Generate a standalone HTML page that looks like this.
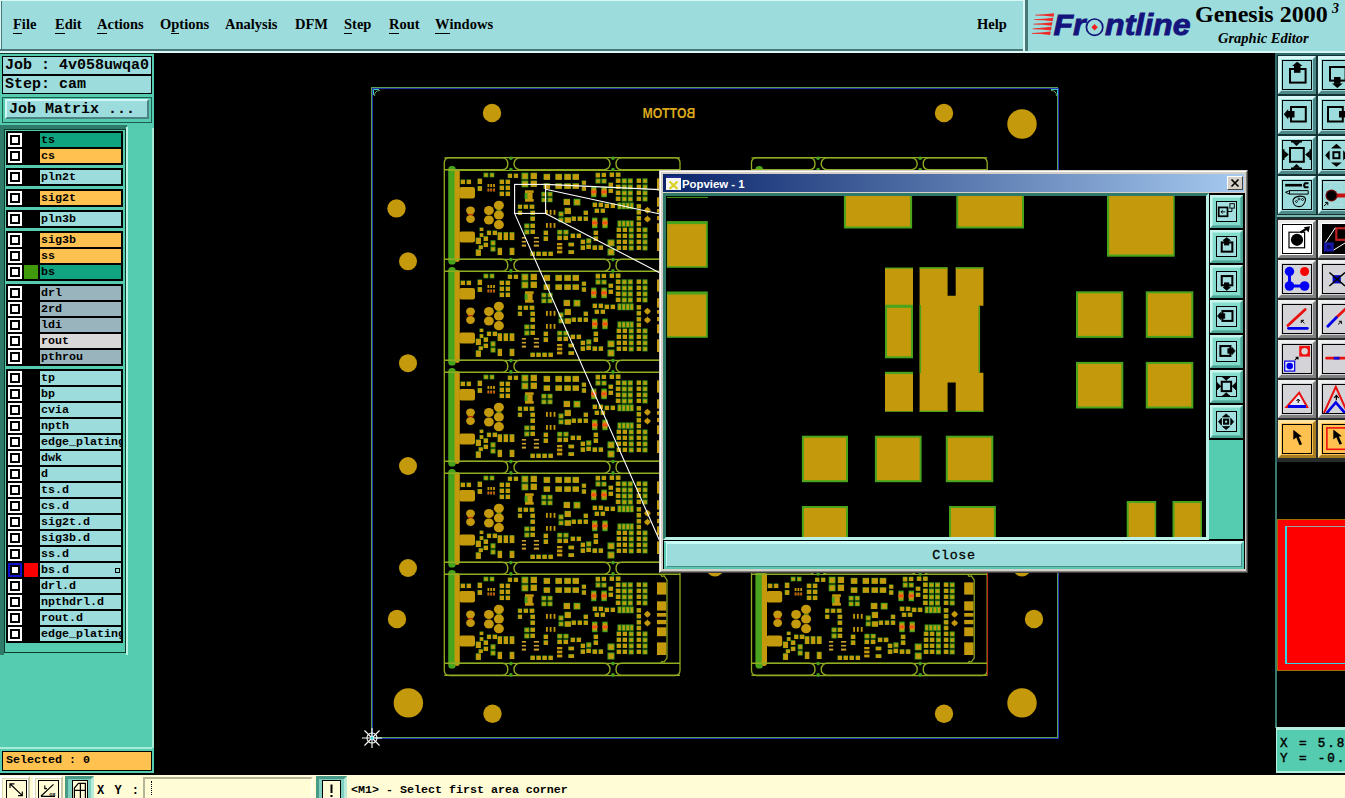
<!DOCTYPE html><html><head><meta charset="utf-8"><title>Genesis 2000 Graphic Editor</title><style>
html,body{margin:0;padding:0;background:#000;}
body{width:1345px;height:798px;overflow:hidden;position:relative;font-family:"Liberation Mono",monospace;}
.abs{position:absolute;}
.mono{font-family:"Liberation Mono",monospace;font-weight:bold;color:#000;white-space:pre;}
.serif{font-family:"Liberation Serif",serif;font-weight:bold;color:#000;white-space:pre;}
#menubar{left:0;top:0;width:1023px;height:49px;background:#9cdcdc;border-left:1px solid #d8f8f8;border-top:1px solid #d8f8f8;box-shadow:inset 1px 0 0 #4a7878;box-sizing:border-box;}
#menubar .mi{position:absolute;top:14px;font-size:14.5px;line-height:18px;}
#menubar u{text-decoration:none;border-bottom:1px solid #000;display:inline-block;line-height:15px;height:16px;}
#logo{left:1028px;top:0;width:317px;height:51px;background:#9cdcdc;}
#left{left:0;top:53px;width:154px;height:720px;background:#55ccb0;}
.lrow{position:absolute;left:0;width:117px;height:14px;}
.cb{position:absolute;left:2px;top:0;width:14px;height:14px;background:#fff;}
.cb i{position:absolute;left:2px;top:2px;width:6px;height:6px;border:2px solid #000;background:#fff;}
.lab{position:absolute;left:34px;top:0;width:81px;height:14px;overflow:hidden;font-size:11.67px;line-height:14px;padding-left:1px;box-sizing:border-box;}
.grp{position:absolute;left:6px;width:117px;background:#000;}
#status{left:0;top:775px;width:1345px;height:23px;background:#fffcd6;}
</style></head><body><svg class="abs" style="left:155px;top:53px" width="1120" height="721" viewBox="155 53 1120 721"><defs><g id="unit"><rect x="4.2" y="-4.0" width="7.6" height="98.5" fill="#48a41c" rx="3.6"/><rect x="16.5" y="9.5" width="4.6" height="4.6" fill="#48a41c"/><rect x="22.5" y="9.5" width="4.6" height="4.6" fill="#48a41c"/><rect x="33.5" y="8.5" width="4.6" height="5.6" fill="#48a41c"/><rect x="33.5" y="16.0" width="4.6" height="4.9" fill="#48a41c"/><rect x="39.5" y="2.7" width="4.8" height="4.6" fill="#48a41c"/><rect x="45.7" y="2.7" width="4.6" height="4.6" fill="#48a41c"/><rect x="55.5" y="9.5" width="4.6" height="4.6" fill="#48a41c"/><rect x="55.5" y="15.5" width="4.6" height="4.6" fill="#48a41c"/><rect x="55.5" y="21.5" width="4.6" height="4.6" fill="#48a41c"/><rect x="61.5" y="9.5" width="4.6" height="4.6" fill="#48a41c"/><rect x="61.5" y="15.5" width="4.6" height="4.6" fill="#48a41c"/><rect x="61.5" y="21.5" width="4.6" height="4.6" fill="#48a41c"/><rect x="63.7" y="3.5" width="4.4" height="4.4" fill="#48a41c"/><rect x="69.7" y="3.5" width="4.4" height="4.4" fill="#48a41c"/><rect x="77.5" y="2.7" width="6.8" height="6.8" fill="#48a41c"/><rect x="77.5" y="10.5" width="6.8" height="6.8" fill="#48a41c"/><rect x="86.5" y="2.7" width="6.4" height="6.4" fill="#48a41c"/><rect x="86.5" y="10.5" width="6.4" height="6.4" fill="#48a41c"/><rect x="52.5" y="39.3" width="5.0" height="1.4" fill="#48a41c"/><rect x="35.5" y="57.5" width="3.8" height="3.6" fill="#48a41c"/><rect x="35.5" y="63.0" width="3.8" height="3.9" fill="#48a41c"/><rect x="42.8" y="60.5" width="4.3" height="4.6" fill="#48a41c"/><rect x="48.5" y="60.5" width="4.6" height="4.6" fill="#48a41c"/><rect x="53.5" y="62.2" width="4.6" height="7.9" fill="#48a41c"/><rect x="59.5" y="62.2" width="4.6" height="7.9" fill="#48a41c"/><rect x="65.5" y="62.2" width="4.8" height="7.9" fill="#48a41c"/><rect x="31.7" y="67.5" width="5.2" height="6.6" fill="#48a41c"/><rect x="39.5" y="66.3" width="4.6" height="4.7" fill="#48a41c"/><rect x="39.5" y="72.5" width="4.6" height="4.6" fill="#48a41c"/><rect x="34.5" y="75.2" width="4.3" height="3.9" fill="#48a41c"/><rect x="46.5" y="70.3" width="5.0" height="5.2" fill="#48a41c"/><rect x="46.5" y="76.5" width="5.0" height="5.0" fill="#48a41c"/><rect x="31.7" y="79.3" width="5.2" height="6.6" fill="#48a41c"/><rect x="53.5" y="77.7" width="4.6" height="7.4" fill="#48a41c"/><rect x="65.5" y="77.7" width="4.8" height="7.4" fill="#48a41c"/><rect x="73.8" y="34.5" width="4.3" height="4.3" fill="#48a41c"/><rect x="79.5" y="34.5" width="4.6" height="4.3" fill="#48a41c"/><rect x="85.5" y="34.5" width="4.8" height="4.3" fill="#48a41c"/><rect x="73.8" y="40.5" width="4.3" height="4.4" fill="#48a41c"/><rect x="86.3" y="40.5" width="4.7" height="4.4" fill="#48a41c"/><rect x="86.3" y="46.4" width="4.7" height="4.5" fill="#48a41c"/><rect x="80.3" y="53.5" width="5.1" height="4.8" fill="#48a41c"/><rect x="86.3" y="53.5" width="4.7" height="4.4" fill="#48a41c"/><rect x="80.3" y="59.5" width="5.1" height="4.9" fill="#48a41c"/><rect x="86.3" y="59.5" width="4.7" height="4.5" fill="#48a41c"/><rect x="80.6" y="22.5" width="3.2" height="6.5" fill="#48a41c"/><rect x="99.5" y="3.8" width="6.6" height="6.0" fill="#48a41c"/><rect x="99.5" y="13.3" width="6.6" height="5.5" fill="#48a41c"/><rect x="111.3" y="3.8" width="6.6" height="6.0" fill="#48a41c"/><rect x="111.3" y="13.3" width="6.6" height="5.5" fill="#48a41c"/><rect x="120.2" y="3.8" width="6.6" height="6.0" fill="#48a41c"/><rect x="120.2" y="13.3" width="6.6" height="5.5" fill="#48a41c"/><rect x="128.4" y="3.8" width="6.6" height="6.0" fill="#48a41c"/><rect x="128.4" y="13.3" width="6.6" height="5.5" fill="#48a41c"/><rect x="137.7" y="10.5" width="4.4" height="4.2" fill="#48a41c"/><rect x="137.7" y="16.2" width="4.4" height="4.5" fill="#48a41c"/><rect x="97.4" y="21.8" width="5.0" height="4.7" fill="#48a41c"/><rect x="97.4" y="27.5" width="5.0" height="4.7" fill="#48a41c"/><rect x="103.5" y="21.8" width="5.0" height="4.7" fill="#48a41c"/><rect x="103.5" y="27.5" width="5.0" height="4.7" fill="#48a41c"/><rect x="119.5" y="28.8" width="6.6" height="6.3" fill="#48a41c"/><rect x="129.5" y="28.8" width="6.9" height="6.7" fill="#48a41c"/><rect x="120.5" y="37.8" width="6.4" height="6.3" fill="#48a41c"/><rect x="120.5" y="47.2" width="6.4" height="5.5" fill="#48a41c"/><rect x="114.5" y="41.5" width="5.0" height="5.0" fill="#48a41c"/><rect x="114.5" y="47.5" width="5.0" height="4.8" fill="#48a41c"/><rect x="127.5" y="46.4" width="4.4" height="4.5" fill="#48a41c"/><rect x="133.5" y="46.4" width="4.5" height="4.5" fill="#48a41c"/><rect x="139.5" y="46.4" width="4.5" height="4.5" fill="#48a41c"/><rect x="139.5" y="40.5" width="4.5" height="4.4" fill="#48a41c"/><rect x="99.5" y="60.5" width="4.6" height="4.6" fill="#48a41c"/><rect x="99.5" y="66.3" width="4.6" height="4.7" fill="#48a41c"/><rect x="86.3" y="81.5" width="4.6" height="4.5" fill="#48a41c"/><rect x="92.2" y="81.5" width="4.6" height="4.5" fill="#48a41c"/><rect x="98.2" y="81.5" width="4.6" height="4.5" fill="#48a41c"/><rect x="104.3" y="81.5" width="4.6" height="4.5" fill="#48a41c"/><rect x="113.2" y="59.8" width="5.1" height="4.7" fill="#48a41c"/><rect x="113.2" y="65.5" width="4.7" height="4.6" fill="#48a41c"/><rect x="119.4" y="59.8" width="5.1" height="4.7" fill="#48a41c"/><rect x="119.4" y="65.5" width="4.7" height="4.6" fill="#48a41c"/><rect x="124.3" y="72.5" width="5.8" height="3.8" fill="#48a41c"/><rect x="124.3" y="80.1" width="5.8" height="3.9" fill="#48a41c"/><rect x="126.5" y="63.5" width="4.6" height="4.6" fill="#48a41c"/><rect x="132.5" y="63.5" width="4.6" height="4.6" fill="#48a41c"/><rect x="136.5" y="69.5" width="4.6" height="4.6" fill="#48a41c"/><rect x="142.2" y="68.4" width="5.1" height="5.1" fill="#48a41c"/><rect x="136.5" y="75.3" width="4.6" height="4.6" fill="#48a41c"/><rect x="142.2" y="74.5" width="4.7" height="4.6" fill="#48a41c"/><rect x="148.4" y="75.3" width="4.7" height="4.6" fill="#48a41c"/><rect x="154.5" y="75.3" width="4.6" height="4.6" fill="#48a41c"/><rect x="149.5" y="60.5" width="4.6" height="4.6" fill="#48a41c"/><rect x="149.5" y="66.3" width="4.6" height="4.7" fill="#48a41c"/><rect x="148.5" y="32.5" width="4.6" height="4.6" fill="#48a41c"/><rect x="154.5" y="32.5" width="4.6" height="4.6" fill="#48a41c"/><rect x="150.5" y="38.5" width="4.6" height="4.4" fill="#48a41c"/><rect x="156.5" y="38.5" width="4.6" height="4.3" fill="#48a41c"/><rect x="160.5" y="33.5" width="4.6" height="4.6" fill="#48a41c"/><rect x="166.5" y="33.5" width="4.6" height="4.6" fill="#48a41c"/><rect x="147.2" y="16.6" width="5.2" height="10.6" fill="#48a41c"/><rect x="157.4" y="16.6" width="5.4" height="10.6" fill="#48a41c"/><rect x="148.1" y="47.6" width="5.3" height="10.6" fill="#48a41c"/><rect x="158.4" y="47.6" width="5.2" height="10.6" fill="#48a41c"/><rect x="151.5" y="2.7" width="4.6" height="4.7" fill="#48a41c"/><rect x="157.5" y="2.7" width="4.6" height="4.4" fill="#48a41c"/><rect x="151.5" y="8.5" width="5.0" height="5.0" fill="#48a41c"/><rect x="157.5" y="8.7" width="5.0" height="4.8" fill="#48a41c"/><rect x="165.5" y="2.4" width="4.6" height="4.5" fill="#48a41c"/><rect x="171.7" y="2.4" width="4.7" height="4.5" fill="#48a41c"/><rect x="164.4" y="12.5" width="4.7" height="4.3" fill="#48a41c"/><rect x="164.4" y="18.5" width="4.7" height="4.4" fill="#48a41c"/><rect x="171.7" y="8.4" width="4.7" height="4.6" fill="#48a41c"/><rect x="171.7" y="14.5" width="4.7" height="4.6" fill="#48a41c"/><rect x="171.7" y="20.5" width="4.7" height="4.6" fill="#48a41c"/><rect x="171.7" y="26.5" width="4.7" height="4.6" fill="#48a41c"/><rect x="177.7" y="8.4" width="5.1" height="5.0" fill="#48a41c"/><rect x="177.7" y="14.5" width="5.1" height="5.0" fill="#48a41c"/><rect x="177.7" y="20.5" width="5.1" height="5.0" fill="#48a41c"/><rect x="177.7" y="26.5" width="5.1" height="5.0" fill="#48a41c"/><rect x="183.7" y="8.4" width="5.1" height="5.0" fill="#48a41c"/><rect x="183.7" y="14.5" width="5.1" height="5.0" fill="#48a41c"/><rect x="183.7" y="20.5" width="5.1" height="5.0" fill="#48a41c"/><rect x="183.7" y="26.5" width="5.1" height="5.0" fill="#48a41c"/><rect x="192.5" y="8.4" width="4.6" height="4.5" fill="#48a41c"/><rect x="192.5" y="14.5" width="4.6" height="4.5" fill="#48a41c"/><rect x="192.5" y="20.5" width="4.6" height="4.5" fill="#48a41c"/><rect x="192.5" y="26.5" width="4.6" height="4.5" fill="#48a41c"/><rect x="192.5" y="57.5" width="4.6" height="4.5" fill="#48a41c"/><rect x="192.5" y="63.5" width="4.6" height="4.5" fill="#48a41c"/><rect x="192.5" y="69.5" width="4.6" height="4.5" fill="#48a41c"/><rect x="192.5" y="75.5" width="4.6" height="4.5" fill="#48a41c"/><rect x="198.5" y="8.4" width="5.0" height="4.9" fill="#48a41c"/><rect x="198.5" y="14.5" width="5.0" height="4.9" fill="#48a41c"/><rect x="198.5" y="20.5" width="5.0" height="4.9" fill="#48a41c"/><rect x="198.5" y="26.5" width="5.0" height="4.9" fill="#48a41c"/><rect x="198.5" y="57.5" width="5.0" height="4.9" fill="#48a41c"/><rect x="198.5" y="63.5" width="5.0" height="4.9" fill="#48a41c"/><rect x="198.5" y="69.5" width="5.0" height="4.9" fill="#48a41c"/><rect x="198.5" y="75.5" width="5.0" height="4.9" fill="#48a41c"/><rect x="192.5" y="34.0" width="4.6" height="4.5" fill="#48a41c"/><rect x="192.5" y="39.9" width="4.6" height="4.5" fill="#48a41c"/><rect x="192.5" y="45.9" width="4.6" height="4.5" fill="#48a41c"/><rect x="192.5" y="51.7" width="4.6" height="4.5" fill="#48a41c"/><rect x="173.5" y="32.5" width="3.9" height="6.7" fill="#48a41c"/><rect x="173.5" y="50.5" width="3.9" height="6.2" fill="#48a41c"/><rect x="177.7" y="32.5" width="3.9" height="6.7" fill="#48a41c"/><rect x="177.7" y="50.5" width="3.9" height="6.2" fill="#48a41c"/><rect x="181.8" y="32.5" width="3.9" height="6.7" fill="#48a41c"/><rect x="181.8" y="50.5" width="3.9" height="6.2" fill="#48a41c"/><rect x="185.7" y="32.5" width="3.9" height="6.7" fill="#48a41c"/><rect x="185.7" y="50.5" width="3.9" height="6.2" fill="#48a41c"/><rect x="172.5" y="57.5" width="4.6" height="4.5" fill="#48a41c"/><rect x="172.5" y="63.5" width="4.6" height="4.5" fill="#48a41c"/><rect x="172.5" y="69.5" width="4.6" height="4.5" fill="#48a41c"/><rect x="172.5" y="75.5" width="4.6" height="4.5" fill="#48a41c"/><rect x="178.5" y="57.5" width="4.6" height="4.5" fill="#48a41c"/><rect x="178.5" y="63.5" width="4.6" height="4.5" fill="#48a41c"/><rect x="178.5" y="69.5" width="4.6" height="4.5" fill="#48a41c"/><rect x="178.5" y="75.5" width="4.6" height="4.5" fill="#48a41c"/><rect x="184.7" y="57.5" width="5.0" height="4.9" fill="#48a41c"/><rect x="184.7" y="63.5" width="5.0" height="4.9" fill="#48a41c"/><rect x="184.7" y="69.5" width="5.0" height="4.9" fill="#48a41c"/><rect x="184.7" y="75.5" width="5.0" height="4.9" fill="#48a41c"/><rect x="163.5" y="69.5" width="7.0" height="6.8" fill="#48a41c"/><rect x="163.5" y="78.5" width="7.0" height="7.0" fill="#48a41c"/><rect x="10.6" y="-1.0" width="5.2" height="93.0" fill="#c49a0c" rx="2.4"/><rect x="17.0" y="10.0" width="4.0" height="4.0" fill="#c49a0c"/><rect x="23.0" y="10.0" width="4.0" height="4.0" fill="#c49a0c"/><rect x="34.0" y="9.0" width="4.0" height="5.0" fill="#c49a0c"/><rect x="34.0" y="16.5" width="4.0" height="4.3" fill="#c49a0c"/><rect x="40.6" y="3.8" width="2.9" height="2.7" fill="#c49a0c"/><rect x="46.8" y="3.8" width="2.7" height="2.7" fill="#c49a0c"/><rect x="43.5" y="14.0" width="1.8" height="3.0" fill="#c49a0c"/><rect x="43.5" y="18.5" width="1.8" height="3.0" fill="#c49a0c"/><rect x="46.3" y="14.0" width="1.8" height="3.0" fill="#c49a0c"/><rect x="46.3" y="18.5" width="1.8" height="3.0" fill="#c49a0c"/><rect x="49.1" y="14.0" width="1.8" height="3.0" fill="#c49a0c"/><rect x="49.1" y="18.5" width="1.8" height="3.0" fill="#c49a0c"/><rect x="56.0" y="10.0" width="4.0" height="4.0" fill="#c49a0c"/><rect x="56.0" y="16.0" width="4.0" height="4.0" fill="#c49a0c"/><rect x="56.0" y="22.0" width="4.0" height="4.0" fill="#c49a0c"/><rect x="62.0" y="10.0" width="4.0" height="4.0" fill="#c49a0c"/><rect x="62.0" y="16.0" width="4.0" height="4.0" fill="#c49a0c"/><rect x="62.0" y="22.0" width="4.0" height="4.0" fill="#c49a0c"/><rect x="64.2" y="4.0" width="3.8" height="3.8" fill="#c49a0c"/><rect x="70.2" y="4.0" width="3.8" height="3.8" fill="#c49a0c"/><rect x="78.6" y="3.8" width="4.9" height="4.9" fill="#c49a0c"/><rect x="78.6" y="11.6" width="4.9" height="4.9" fill="#c49a0c"/><rect x="87.0" y="3.2" width="5.8" height="5.8" fill="#c49a0c"/><rect x="87.0" y="11.0" width="5.8" height="5.8" fill="#c49a0c"/><rect x="15.2" y="17.0" width="15.8" height="11.5" fill="#c49a0c" rx="2.2"/><rect x="15.2" y="61.5" width="15.8" height="11.0" fill="#c49a0c" rx="2.2"/><ellipse cx="26.5" cy="40.4" rx="4.4" ry="4.0" fill="#c49a0c"/><ellipse cx="26.5" cy="49.0" rx="4.4" ry="4.0" fill="#c49a0c"/><ellipse cx="44.9" cy="40.5" rx="4.9" ry="4.5" fill="#c49a0c"/><ellipse cx="44.9" cy="50.0" rx="4.9" ry="4.5" fill="#c49a0c"/><ellipse cx="54.9" cy="35.3" rx="5.0" ry="4.6" fill="#c49a0c"/><ellipse cx="54.9" cy="45.0" rx="5.0" ry="4.6" fill="#c49a0c"/><ellipse cx="54.9" cy="54.7" rx="5.0" ry="4.6" fill="#c49a0c"/><rect x="36.0" y="58.0" width="3.2" height="3.0" fill="#c49a0c"/><rect x="36.0" y="63.5" width="3.2" height="3.3" fill="#c49a0c"/><rect x="43.3" y="61.0" width="3.7" height="4.0" fill="#c49a0c"/><rect x="49.0" y="61.0" width="4.0" height="4.0" fill="#c49a0c"/><rect x="54.0" y="62.7" width="4.0" height="7.3" fill="#c49a0c"/><rect x="60.0" y="62.7" width="4.0" height="7.3" fill="#c49a0c"/><rect x="66.0" y="62.7" width="4.2" height="7.3" fill="#c49a0c"/><rect x="32.2" y="68.0" width="4.6" height="6.0" fill="#c49a0c"/><rect x="40.0" y="66.8" width="4.0" height="4.1" fill="#c49a0c"/><rect x="40.0" y="73.0" width="4.0" height="4.0" fill="#c49a0c"/><rect x="35.0" y="75.7" width="3.7" height="3.3" fill="#c49a0c"/><rect x="47.6" y="71.4" width="3.1" height="3.3" fill="#c49a0c"/><rect x="47.6" y="77.6" width="3.1" height="3.1" fill="#c49a0c"/><rect x="32.2" y="79.8" width="4.6" height="6.0" fill="#c49a0c"/><rect x="54.0" y="78.2" width="4.0" height="6.8" fill="#c49a0c"/><rect x="66.0" y="78.2" width="4.2" height="6.8" fill="#c49a0c"/><rect x="74.3" y="35.0" width="3.7" height="3.7" fill="#c49a0c"/><rect x="80.0" y="35.0" width="4.0" height="3.7" fill="#c49a0c"/><rect x="86.0" y="35.0" width="4.2" height="3.7" fill="#c49a0c"/><rect x="74.3" y="41.0" width="3.7" height="3.8" fill="#c49a0c"/><rect x="86.8" y="41.0" width="4.1" height="3.8" fill="#c49a0c"/><rect x="86.8" y="46.9" width="4.1" height="3.9" fill="#c49a0c"/><rect x="81.4" y="54.6" width="3.2" height="2.9" fill="#c49a0c"/><rect x="86.8" y="54.0" width="4.1" height="3.8" fill="#c49a0c"/><rect x="81.4" y="60.6" width="3.2" height="3.0" fill="#c49a0c"/><rect x="86.8" y="60.0" width="4.1" height="3.9" fill="#c49a0c"/><rect x="77.8" y="67.0" width="4.2" height="1.6" fill="#c8a030"/><rect x="77.8" y="70.9" width="4.2" height="1.6" fill="#c8a030"/><rect x="77.8" y="74.6" width="4.2" height="2.0" fill="#c8a030"/><rect x="89.8" y="67.0" width="5.2" height="1.6" fill="#c8a030"/><rect x="89.8" y="70.9" width="5.2" height="1.6" fill="#c8a030"/><rect x="89.8" y="74.6" width="5.2" height="2.0" fill="#c8a030"/><rect x="81.0" y="20.3" width="8.7" height="2.6" fill="#c49a0c"/><rect x="83.4" y="22.8" width="5.2" height="6.3" fill="#c49a0c"/><rect x="81.0" y="29.0" width="8.7" height="2.7" fill="#c49a0c"/><rect x="100.0" y="4.3" width="6.0" height="5.4" fill="#c49a0c"/><rect x="100.0" y="13.8" width="6.0" height="4.9" fill="#c49a0c"/><rect x="111.8" y="4.3" width="6.0" height="5.4" fill="#c49a0c"/><rect x="111.8" y="13.8" width="6.0" height="4.9" fill="#c49a0c"/><rect x="120.7" y="4.3" width="6.0" height="5.4" fill="#c49a0c"/><rect x="120.7" y="13.8" width="6.0" height="4.9" fill="#c49a0c"/><rect x="128.9" y="4.3" width="6.0" height="5.4" fill="#c49a0c"/><rect x="128.9" y="13.8" width="6.0" height="4.9" fill="#c49a0c"/><rect x="138.2" y="11.0" width="3.8" height="3.6" fill="#c49a0c"/><rect x="138.2" y="16.7" width="3.8" height="3.9" fill="#c49a0c"/><rect x="98.5" y="22.9" width="3.1" height="2.8" fill="#c49a0c"/><rect x="98.5" y="28.6" width="3.1" height="2.8" fill="#c49a0c"/><rect x="104.6" y="22.9" width="3.1" height="2.8" fill="#c49a0c"/><rect x="104.6" y="28.6" width="3.1" height="2.8" fill="#c49a0c"/><rect x="120.0" y="29.3" width="6.0" height="5.7" fill="#c49a0c"/><rect x="130.6" y="29.9" width="5.0" height="4.8" fill="#c49a0c"/><rect x="121.0" y="38.3" width="5.8" height="5.7" fill="#c49a0c"/><rect x="121.0" y="47.7" width="5.8" height="4.9" fill="#c49a0c"/><rect x="115.6" y="42.6" width="3.1" height="3.1" fill="#c49a0c"/><rect x="115.6" y="48.6" width="3.1" height="2.9" fill="#c49a0c"/><rect x="128.0" y="46.9" width="3.8" height="3.9" fill="#c49a0c"/><rect x="134.0" y="46.9" width="3.9" height="3.9" fill="#c49a0c"/><rect x="140.0" y="46.9" width="3.9" height="3.9" fill="#c49a0c"/><rect x="140.0" y="41.0" width="3.9" height="3.8" fill="#c49a0c"/><rect x="102.0" y="39.9" width="1.8" height="4.9" fill="#c49a0c"/><rect x="102.0" y="53.0" width="1.8" height="4.8" fill="#c49a0c"/><rect x="105.7" y="39.9" width="1.8" height="4.9" fill="#c49a0c"/><rect x="105.7" y="53.0" width="1.8" height="4.8" fill="#c49a0c"/><rect x="109.6" y="39.9" width="1.8" height="4.9" fill="#c49a0c"/><rect x="109.6" y="53.0" width="1.8" height="4.8" fill="#c49a0c"/><rect x="100.0" y="61.0" width="4.0" height="4.0" fill="#c49a0c"/><rect x="100.0" y="66.8" width="4.0" height="4.1" fill="#c49a0c"/><rect x="86.8" y="82.0" width="4.0" height="3.9" fill="#c49a0c"/><rect x="92.7" y="82.0" width="4.0" height="3.9" fill="#c49a0c"/><rect x="98.7" y="82.0" width="4.0" height="3.9" fill="#c49a0c"/><rect x="104.8" y="82.0" width="4.0" height="3.9" fill="#c49a0c"/><rect x="114.3" y="60.9" width="3.2" height="2.8" fill="#c49a0c"/><rect x="113.7" y="66.0" width="4.1" height="4.0" fill="#c49a0c"/><rect x="120.5" y="60.9" width="3.2" height="2.8" fill="#c49a0c"/><rect x="119.9" y="66.0" width="4.1" height="4.0" fill="#c49a0c"/><rect x="113.0" y="73.0" width="5.3" height="2.3" fill="#c49a0c"/><rect x="113.0" y="76.6" width="5.3" height="2.7" fill="#c49a0c"/><rect x="113.0" y="80.6" width="5.3" height="2.8" fill="#c49a0c"/><rect x="124.8" y="73.0" width="5.2" height="3.2" fill="#c49a0c"/><rect x="124.8" y="80.6" width="5.2" height="3.3" fill="#c49a0c"/><rect x="127.0" y="64.0" width="4.0" height="4.0" fill="#c49a0c"/><rect x="133.0" y="64.0" width="4.0" height="4.0" fill="#c49a0c"/><rect x="137.0" y="70.0" width="4.0" height="4.0" fill="#c49a0c"/><rect x="143.3" y="69.5" width="3.2" height="3.2" fill="#c49a0c"/><rect x="137.0" y="75.8" width="4.0" height="4.0" fill="#c49a0c"/><rect x="142.7" y="75.0" width="4.1" height="4.0" fill="#c49a0c"/><rect x="148.9" y="75.8" width="4.1" height="4.0" fill="#c49a0c"/><rect x="155.0" y="75.8" width="4.0" height="4.0" fill="#c49a0c"/><rect x="150.0" y="61.0" width="4.0" height="4.0" fill="#c49a0c"/><rect x="150.0" y="66.8" width="4.0" height="4.1" fill="#c49a0c"/><rect x="149.0" y="33.0" width="4.0" height="4.0" fill="#c49a0c"/><rect x="155.0" y="33.0" width="4.0" height="4.0" fill="#c49a0c"/><rect x="151.0" y="39.0" width="4.0" height="3.8" fill="#c49a0c"/><rect x="157.0" y="39.0" width="4.0" height="3.7" fill="#c49a0c"/><rect x="161.0" y="34.0" width="4.0" height="4.0" fill="#c49a0c"/><rect x="167.0" y="34.0" width="4.0" height="4.0" fill="#c49a0c"/><rect x="147.6" y="18.2" width="4.4" height="7.4" fill="#c49a0c"/><rect x="157.8" y="18.2" width="4.6" height="7.4" fill="#c49a0c"/><rect x="148.5" y="49.2" width="4.5" height="7.4" fill="#c49a0c"/><rect x="158.8" y="49.2" width="4.4" height="7.4" fill="#c49a0c"/><rect x="152.0" y="3.2" width="4.0" height="4.1" fill="#c49a0c"/><rect x="158.0" y="3.2" width="4.0" height="3.8" fill="#c49a0c"/><rect x="152.6" y="9.6" width="3.1" height="3.1" fill="#c49a0c"/><rect x="158.6" y="9.8" width="3.1" height="2.9" fill="#c49a0c"/><rect x="166.0" y="2.9" width="4.0" height="3.9" fill="#c49a0c"/><rect x="172.2" y="2.9" width="4.1" height="3.9" fill="#c49a0c"/><rect x="164.9" y="13.0" width="4.1" height="3.7" fill="#c49a0c"/><rect x="164.9" y="19.0" width="4.1" height="3.8" fill="#c49a0c"/><rect x="172.2" y="8.9" width="4.1" height="4.0" fill="#c49a0c"/><rect x="172.2" y="15.0" width="4.1" height="4.0" fill="#c49a0c"/><rect x="172.2" y="21.0" width="4.1" height="4.0" fill="#c49a0c"/><rect x="172.2" y="27.0" width="4.1" height="4.0" fill="#c49a0c"/><rect x="178.8" y="9.5" width="3.2" height="3.1" fill="#c49a0c"/><rect x="178.8" y="15.6" width="3.2" height="3.1" fill="#c49a0c"/><rect x="178.8" y="21.6" width="3.2" height="3.1" fill="#c49a0c"/><rect x="178.8" y="27.6" width="3.2" height="3.1" fill="#c49a0c"/><rect x="184.8" y="9.5" width="3.2" height="3.1" fill="#c49a0c"/><rect x="184.8" y="15.6" width="3.2" height="3.1" fill="#c49a0c"/><rect x="184.8" y="21.6" width="3.2" height="3.1" fill="#c49a0c"/><rect x="184.8" y="27.6" width="3.2" height="3.1" fill="#c49a0c"/><rect x="193.0" y="8.9" width="4.0" height="3.9" fill="#c49a0c"/><rect x="193.0" y="15.0" width="4.0" height="3.9" fill="#c49a0c"/><rect x="193.0" y="21.0" width="4.0" height="3.9" fill="#c49a0c"/><rect x="193.0" y="27.0" width="4.0" height="3.9" fill="#c49a0c"/><rect x="193.0" y="58.0" width="4.0" height="3.9" fill="#c49a0c"/><rect x="193.0" y="64.0" width="4.0" height="3.9" fill="#c49a0c"/><rect x="193.0" y="70.0" width="4.0" height="3.9" fill="#c49a0c"/><rect x="193.0" y="76.0" width="4.0" height="3.9" fill="#c49a0c"/><rect x="199.6" y="9.5" width="3.1" height="3.0" fill="#c49a0c"/><rect x="199.6" y="15.6" width="3.1" height="3.0" fill="#c49a0c"/><rect x="199.6" y="21.6" width="3.1" height="3.0" fill="#c49a0c"/><rect x="199.6" y="27.6" width="3.1" height="3.0" fill="#c49a0c"/><rect x="199.6" y="58.6" width="3.1" height="3.0" fill="#c49a0c"/><rect x="199.6" y="64.6" width="3.1" height="3.0" fill="#c49a0c"/><rect x="199.6" y="70.6" width="3.1" height="3.0" fill="#c49a0c"/><rect x="199.6" y="76.6" width="3.1" height="3.0" fill="#c49a0c"/><rect x="193.0" y="34.5" width="4.0" height="3.9" fill="#c49a0c"/><rect x="193.0" y="40.4" width="4.0" height="3.9" fill="#c49a0c"/><rect x="193.0" y="46.4" width="4.0" height="3.9" fill="#c49a0c"/><rect x="193.0" y="52.2" width="4.0" height="3.9" fill="#c49a0c"/><rect x="174.6" y="33.6" width="2.0" height="4.8" fill="#c49a0c"/><rect x="174.6" y="51.6" width="2.0" height="4.3" fill="#c49a0c"/><rect x="178.8" y="33.6" width="2.0" height="4.8" fill="#c49a0c"/><rect x="178.8" y="51.6" width="2.0" height="4.3" fill="#c49a0c"/><rect x="182.9" y="33.6" width="2.0" height="4.8" fill="#c49a0c"/><rect x="182.9" y="51.6" width="2.0" height="4.3" fill="#c49a0c"/><rect x="186.8" y="33.6" width="2.0" height="4.8" fill="#c49a0c"/><rect x="186.8" y="51.6" width="2.0" height="4.3" fill="#c49a0c"/><rect x="173.0" y="58.0" width="4.0" height="3.9" fill="#c49a0c"/><rect x="173.0" y="64.0" width="4.0" height="3.9" fill="#c49a0c"/><rect x="173.0" y="70.0" width="4.0" height="3.9" fill="#c49a0c"/><rect x="173.0" y="76.0" width="4.0" height="3.9" fill="#c49a0c"/><rect x="179.0" y="58.0" width="4.0" height="3.9" fill="#c49a0c"/><rect x="179.0" y="64.0" width="4.0" height="3.9" fill="#c49a0c"/><rect x="179.0" y="70.0" width="4.0" height="3.9" fill="#c49a0c"/><rect x="179.0" y="76.0" width="4.0" height="3.9" fill="#c49a0c"/><rect x="185.8" y="58.6" width="3.1" height="3.0" fill="#c49a0c"/><rect x="185.8" y="64.6" width="3.1" height="3.0" fill="#c49a0c"/><rect x="185.8" y="70.6" width="3.1" height="3.0" fill="#c49a0c"/><rect x="185.8" y="76.6" width="3.1" height="3.0" fill="#c49a0c"/><rect x="164.6" y="70.6" width="5.1" height="4.9" fill="#c49a0c"/><rect x="164.6" y="79.6" width="5.1" height="5.1" fill="#c49a0c"/><circle cx="203.4" cy="40.2" r="2.6" fill="#c49a0c"/><path d="M200 40.2 h6.8 M203.4 36.9 v6.6" stroke="#c49a0c" stroke-width="1"/><circle cx="203.4" cy="49.0" r="2.6" fill="#c49a0c"/><path d="M200 49.0 h6.8 M203.4 45.7 v6.6" stroke="#c49a0c" stroke-width="1"/><rect x="213.0" y="8.4" width="9.3" height="12.2" fill="#c49a0c"/><rect x="213.0" y="27.3" width="9.3" height="9.3" fill="#c49a0c"/><rect x="213.0" y="39.0" width="9.3" height="3.7" fill="#c49a0c"/><rect x="213.0" y="45.9" width="9.3" height="4.3" fill="#c49a0c"/><rect x="213.0" y="53.3" width="9.3" height="8.9" fill="#c49a0c"/><rect x="213.0" y="68.4" width="9.3" height="12.6" fill="#c49a0c"/><rect x="43.5" y="19.6" width="1.8" height="1.2" fill="#d03010"/><rect x="46.3" y="19.6" width="1.8" height="1.2" fill="#d03010"/><rect x="49.1" y="19.6" width="1.8" height="1.2" fill="#d03010"/><rect x="23.5" y="44.2" width="6.0" height="0.9" fill="#e03010"/><rect x="147.1" y="20.5" width="5.4" height="2.8" fill="#f05018"/><rect x="157.3" y="20.5" width="5.6" height="2.8" fill="#f05018"/><rect x="148.0" y="51.5" width="5.5" height="2.8" fill="#f05018"/><rect x="158.3" y="51.5" width="5.4" height="2.8" fill="#f05018"/><path d="M4.5 0.5 H216.5 L218 2.5 L220 1.8 L223 6 V84 L220 88 L218 87.4 L216.5 89.4 H4.5" fill="none" stroke="#90ac20" stroke-width="1.2"/></g><g id="slots" fill="none" stroke="#90ac20" stroke-width="1.4"><path d="M0.3 0.3 H58 C62 0.3,63.8 3,63.8 6.2 C63.8 9.5,62 12.2,58 12.2 H0.3"/><rect x="70" y="0.3" width="96" height="11.9" rx="5.8"/><path d="M236 0.3 H178 C174 0.3,172 3,172 6.2 C172 9.5,174 12.2,178 12.2 H236"/><circle cx="66.9" cy="0.6" r="1.8" fill="#48a41c" stroke="none"/><circle cx="66.9" cy="11.9" r="1.8" fill="#48a41c" stroke="none"/><circle cx="169.0" cy="0.6" r="1.8" fill="#48a41c" stroke="none"/><circle cx="169.0" cy="11.9" r="1.8" fill="#48a41c" stroke="none"/></g></defs><rect x="371.5" y="87.5" width="686" height="650" fill="none" stroke="#5aa050" stroke-width="1"/><rect x="372.5" y="88.5" width="686" height="650" fill="none" stroke="#2434b0" stroke-width="1"/><path d="M374.5 96 Q374.5 90.5 380 90.5" fill="none" stroke="#58a850" stroke-width="1"/><path d="M379 89.5 H373.5 V95" fill="none" stroke="#40c8c0" stroke-width="1"/><path d="M1056.5 96 Q1056.5 90.5 1051 90.5" fill="none" stroke="#58a850" stroke-width="1"/><path d="M1051 89.5 H1057.5 V95" fill="none" stroke="#40c8c0" stroke-width="1"/><circle cx="492.0" cy="113.0" r="9.2" fill="#c49a0c"/><circle cx="944.0" cy="113.0" r="9.2" fill="#c49a0c"/><circle cx="1022.0" cy="124.0" r="14.7" fill="#c49a0c"/><circle cx="396.5" cy="208.4" r="9.2" fill="#c49a0c"/><circle cx="408.0" cy="261.3" r="9.0" fill="#c49a0c"/><circle cx="408.0" cy="363.2" r="9.0" fill="#c49a0c"/><circle cx="408.0" cy="466.0" r="9.0" fill="#c49a0c"/><circle cx="408.0" cy="568.0" r="9.0" fill="#c49a0c"/><circle cx="397.0" cy="619.0" r="9.2" fill="#c49a0c"/><circle cx="408.4" cy="702.9" r="14.7" fill="#c49a0c"/><circle cx="492.5" cy="713.8" r="9.2" fill="#c49a0c"/><circle cx="944.0" cy="713.8" r="9.2" fill="#c49a0c"/><circle cx="1022.0" cy="702.9" r="14.7" fill="#c49a0c"/><circle cx="1034.0" cy="619.0" r="9.2" fill="#c49a0c"/><circle cx="715.0" cy="567.2" r="9.2" fill="#c49a0c"/><circle cx="1022.0" cy="567.2" r="9.2" fill="#c49a0c"/><text transform="translate(695.3 118) scale(-0.86 1)" font-family="Liberation Sans, sans-serif" font-size="14.2" font-weight="bold" fill="#dcaa1c">BOTTOM</text><rect x="444.3" y="157.6" width="235.7" height="518" rx="5" fill="none" stroke="#90ac20" stroke-width="1.3"/><use href="#unit" x="444.0" y="170.0"/><use href="#unit" x="444.0" y="271.0"/><use href="#unit" x="444.0" y="372.0"/><use href="#unit" x="444.0" y="473.0"/><use href="#unit" x="444.0" y="574.0"/><use href="#slots" x="444.0" y="157.6"/><use href="#slots" x="444.0" y="259.0"/><use href="#slots" x="444.0" y="360.0"/><use href="#slots" x="444.0" y="461.0"/><use href="#slots" x="444.0" y="562.0"/><use href="#slots" x="444.0" y="663.0"/><rect x="751.5" y="157.6" width="235.7" height="518" rx="5" fill="none" stroke="#90ac20" stroke-width="1.3"/><use href="#unit" x="751.2" y="170.0"/><use href="#unit" x="751.2" y="271.0"/><use href="#unit" x="751.2" y="372.0"/><use href="#unit" x="751.2" y="473.0"/><use href="#unit" x="751.2" y="574.0"/><use href="#slots" x="751.2" y="157.6"/><use href="#slots" x="751.2" y="259.0"/><use href="#slots" x="751.2" y="360.0"/><use href="#slots" x="751.2" y="461.0"/><use href="#slots" x="751.2" y="562.0"/><use href="#slots" x="751.2" y="663.0"/><path d="M987.6 573 V676" stroke="#c02018" stroke-width="1"/><g fill="none" stroke="#fff" stroke-width="1.1"><rect x="514.6" y="184.4" width="31" height="29"/><path d="M545.6 184.4 L660 189.6 M545.6 189.3 L660 214 M545.6 213.4 L660 273 M514.6 213.4 L662 546"/></g><g stroke="#fff" stroke-width="1.1" fill="none"><circle cx="372" cy="738" r="5"/><path d="M372 728 V748 M362 738 H382 M364.5 730.5 L379.5 745.5 M364.5 745.5 L379.5 730.5"/></g><circle cx="372" cy="738" r="1.5" fill="#30d8e8"/></svg><div id="menubar" class="abs"><span class="mi serif" style="left:12px"><u>F</u>ile</span><span class="mi serif" style="left:54px"><u>E</u>dit</span><span class="mi serif" style="left:96px"><u>A</u>ctions</span><span class="mi serif" style="left:159px">O<u>p</u>tions</span><span class="mi serif" style="left:224px">Analysis</span><span class="mi serif" style="left:294px">DFM</span><span class="mi serif" style="left:343px"><u>S</u>tep</span><span class="mi serif" style="left:388px"><u>R</u>out</span><span class="mi serif" style="left:434px"><u>W</u>indows</span><span class="mi serif" style="left:976px">Help</span></div><div class="abs" style="left:0;top:49px;width:1025px;height:2px;background:#4a7878"></div><div class="abs" style="left:0;top:51px;width:1345px;height:2px;background:#d8f8f8"></div><div class="abs" style="left:1023px;top:0;width:2px;height:51px;background:#d8f8f8"></div><div class="abs" style="left:1025px;top:0;width:3px;height:51px;background:#4a7878"></div><div id="logo" class="abs"><svg class="abs" style="left:0;top:0" width="317" height="51" viewBox="1028 0 317 51"><polygon points="1035.3,14.8 1044.5,14.2 1054.2,13.2 1053.6,16.8 1044.5,15.8 1035.3,15.6" fill="#f02828"/><polygon points="1034.4,19.3 1043.6,18.7 1053.3,17.7 1052.7,21.3 1043.6,20.3 1034.4,20.1" fill="#f02828"/><polygon points="1033.5,23.8 1042.7,23.2 1052.4,22.2 1051.8,25.8 1042.7,24.8 1033.5,24.6" fill="#f02828"/><polygon points="1032.7,28.4 1041.9,27.8 1051.6,26.8 1051.0,30.4 1041.9,29.4 1032.7,29.2" fill="#f02828"/><polygon points="1031.8,33.0 1041.0,32.4 1050.7,31.4 1050.1,35.0 1041.0,34.0 1031.8,33.8" fill="#f02828"/><text x="1053.5" y="34.6" font-family="Liberation Sans, sans-serif" font-weight="bold" font-style="italic" font-size="30" fill="#14147c" stroke="#14147c" stroke-width="0.9" textLength="137" lengthAdjust="spacingAndGlyphs">Fr<tspan fill="#9cdcdc" stroke="#9cdcdc">o</tspan>ntline</text><circle cx="1094.6" cy="27.2" r="8.2" fill="none" stroke="#14147c" stroke-width="1.7"/><polygon points="1094.6,24 1097.8,27.2 1094.6,30.4 1091.4,27.2" fill="#f02020"/></svg><span class="abs serif" style="left:167px;top:1px;font-size:24px;line-height:26px">Genesis 2000</span><span class="abs serif" style="left:304px;top:2px;font-size:14px;line-height:14px;font-style:italic">3</span><span class="abs serif" style="left:190px;top:30px;font-size:14.5px;line-height:16px;font-style:italic">Graphic Editor</span></div><div id="left" class="abs"><div class="abs" style="left:0;top:0;width:154px;height:1px;background:#103828"></div><div class="abs" style="left:152px;top:75px;width:2px;height:620px;background:#a8ecd8"></div><div class="abs mono" style="left:2px;top:3px;width:150px;height:19px;box-sizing:border-box;border:1px solid #000;background:#9cdcdc;font-size:15px;line-height:17px;padding-left:2px">Job : 4v058uwqa0</div><div class="abs mono" style="left:2px;top:22px;width:150px;height:19px;box-sizing:border-box;border:1px solid #000;background:#9cdcdc;font-size:15px;line-height:17px;padding-left:2px">Step: cam</div><div class="abs" style="left:2px;top:44px;width:150px;height:26px;box-sizing:border-box;border:1px solid #1c5c4c;"></div><div class="abs mono" style="left:5px;top:46px;width:144px;height:20px;box-sizing:border-box;border:2px solid;border-color:#d4f8f8 #4a8484 #4a8484 #d4f8f8;background:#9cdcdc;font-size:15px;line-height:18px;padding-left:2px">Job Matrix ...</div><div class="abs" style="left:0;top:72px;width:127px;height:4px;background:#2f7a68"></div><div class="abs" style="left:0;top:72px;width:4px;height:530px;background:#2f7a68"></div><div class="abs" style="left:4px;top:76px;width:122px;height:524px;box-sizing:border-box;border:1px solid #0c3c2c;"></div><div class="abs" style="left:126px;top:74px;width:2px;height:528px;background:#b8f4e4"></div><div class="grp" style="top:78px;height:34px"><div class="lrow" style="top:2px"><span class="cb"><i></i></span><span class="lab mono" style="background:#10a37f">ts</span></div><div class="lrow" style="top:18px"><span class="cb"><i></i></span><span class="lab mono" style="background:#ffc250">cs</span></div></div><div class="grp" style="top:115px;height:18px"><div class="lrow" style="top:2px"><span class="cb"><i></i></span><span class="lab mono" style="background:#9cdcdc">pln2t</span></div></div><div class="grp" style="top:136px;height:18px"><div class="lrow" style="top:2px"><span class="cb"><i></i></span><span class="lab mono" style="background:#ffc250">sig2t</span></div></div><div class="grp" style="top:157px;height:18px"><div class="lrow" style="top:2px"><span class="cb"><i></i></span><span class="lab mono" style="background:#9cdcdc">pln3b</span></div></div><div class="grp" style="top:178px;height:50px"><div class="lrow" style="top:2px"><span class="cb"><i></i></span><span class="lab mono" style="background:#ffc250">sig3b</span></div><div class="lrow" style="top:18px"><span class="cb"><i></i></span><span class="lab mono" style="background:#ffc250">ss</span></div><div class="lrow" style="top:34px"><span class="cb"><i></i></span><span class="abs" style="left:18px;top:0;width:14px;height:14px;background:#3f9a0c"></span><span class="lab mono" style="background:#10a37f">bs</span></div></div><div class="grp" style="top:231px;height:82px"><div class="lrow" style="top:2px"><span class="cb"><i></i></span><span class="lab mono" style="background:#9ab4be">drl</span></div><div class="lrow" style="top:18px"><span class="cb"><i></i></span><span class="lab mono" style="background:#9ab4be">2rd</span></div><div class="lrow" style="top:34px"><span class="cb"><i></i></span><span class="lab mono" style="background:#9ab4be">ldi</span></div><div class="lrow" style="top:50px"><span class="cb"><i></i></span><span class="lab mono" style="background:#d8d8d8">rout</span></div><div class="lrow" style="top:66px"><span class="cb"><i></i></span><span class="lab mono" style="background:#9ab4be">pthrou</span></div></div><div class="grp" style="top:316px;height:274px"><div class="lrow" style="top:2px"><span class="cb"><i></i></span><span class="lab mono" style="background:#9cdcdc">tp</span></div><div class="lrow" style="top:18px"><span class="cb"><i></i></span><span class="lab mono" style="background:#9cdcdc">bp</span></div><div class="lrow" style="top:34px"><span class="cb"><i></i></span><span class="lab mono" style="background:#9cdcdc">cvia</span></div><div class="lrow" style="top:50px"><span class="cb"><i></i></span><span class="lab mono" style="background:#9cdcdc">npth</span></div><div class="lrow" style="top:66px"><span class="cb"><i></i></span><span class="lab mono" style="background:#9cdcdc">edge_plating</span></div><div class="lrow" style="top:82px"><span class="cb"><i></i></span><span class="lab mono" style="background:#9cdcdc">dwk</span></div><div class="lrow" style="top:98px"><span class="cb"><i></i></span><span class="lab mono" style="background:#9cdcdc">d</span></div><div class="lrow" style="top:114px"><span class="cb"><i></i></span><span class="lab mono" style="background:#9cdcdc">ts.d</span></div><div class="lrow" style="top:130px"><span class="cb"><i></i></span><span class="lab mono" style="background:#9cdcdc">cs.d</span></div><div class="lrow" style="top:146px"><span class="cb"><i></i></span><span class="lab mono" style="background:#9cdcdc">sig2t.d</span></div><div class="lrow" style="top:162px"><span class="cb"><i></i></span><span class="lab mono" style="background:#9cdcdc">sig3b.d</span></div><div class="lrow" style="top:178px"><span class="cb"><i></i></span><span class="lab mono" style="background:#9cdcdc">ss.d</span></div><div class="lrow" style="top:194px"><span class="cb" style="background:#1010d0"><i></i></span><span class="abs" style="left:18px;top:0;width:14px;height:14px;background:#ff0000"></span><span class="lab mono" style="background:#9cdcdc">bs.d</span><span class="abs" style="left:109px;top:5px;width:3px;height:3px;border:1px solid #000"></span></div><div class="lrow" style="top:210px"><span class="cb"><i></i></span><span class="lab mono" style="background:#9cdcdc">drl.d</span></div><div class="lrow" style="top:226px"><span class="cb"><i></i></span><span class="lab mono" style="background:#9cdcdc">npthdrl.d</span></div><div class="lrow" style="top:242px"><span class="cb"><i></i></span><span class="lab mono" style="background:#9cdcdc">rout.d</span></div><div class="lrow" style="top:258px"><span class="cb"><i></i></span><span class="lab mono" style="background:#9cdcdc">edge_plating</span></div></div><div class="abs" style="left:0;top:694px;width:152px;height:2px;background:#a8ecd8"></div><div class="abs mono" style="left:2px;top:698px;width:150px;height:20px;box-sizing:border-box;border:1px solid #000;background:#ffc250;font-size:11.67px;line-height:17px;padding-left:3px">Selected : 0</div></div><div class="abs" style="left:1275px;top:53px;width:70px;height:409px;background:#143434;border-left:2px solid #2f6a6a;border-top:2px solid #2f6a6a;box-sizing:border-box;overflow:hidden"><div class="abs" style="left:0;top:163px;width:70px;height:244px;background:#282c2c"></div><div class="abs" style="left:1px;top:1px;width:38px;height:38px;box-sizing:border-box;border:3px solid;border-color:#d8f8f8 #4e8888 #4e8888 #d8f8f8;background:#9cdcdc"><div class="abs" style="left:1px;top:1px;width:30px;height:30px;box-sizing:border-box;border:1px solid #000;background:#9cdcdc"><svg class="abs" style="left:0;top:0" width="28" height="28" viewBox="0 0 28 28"><rect x="7" y="8" width="15.6" height="13.6" fill="none" stroke="#000" stroke-width="2"/><rect x="11" y="4.5" width="6.5" height="7.3" fill="#000"/><polygon points="14.2,0.8 9.0,5.0 19.6,5.0" fill="#000"/></svg></div></div><div class="abs" style="left:41px;top:1px;width:38px;height:38px;box-sizing:border-box;border:3px solid;border-color:#d8f8f8 #4e8888 #4e8888 #d8f8f8;background:#9cdcdc"><div class="abs" style="left:1px;top:1px;width:30px;height:30px;box-sizing:border-box;border:1px solid #000;background:#9cdcdc"><svg class="abs" style="left:0;top:0" width="28" height="28" viewBox="0 0 28 28"><rect x="7" y="6" width="15.6" height="13.6" fill="none" stroke="#000" stroke-width="2"/><rect x="11" y="16" width="6.5" height="6.8" fill="#000"/><polygon points="14.3,27.0 9.0,22.5 19.8,22.5" fill="#000"/></svg></div></div><div class="abs" style="left:1px;top:41px;width:38px;height:38px;box-sizing:border-box;border:3px solid;border-color:#d8f8f8 #4e8888 #4e8888 #d8f8f8;background:#9cdcdc"><div class="abs" style="left:1px;top:1px;width:30px;height:30px;box-sizing:border-box;border:1px solid #000;background:#9cdcdc"><svg class="abs" style="left:0;top:0" width="28" height="28" viewBox="0 0 28 28"><rect x="8" y="6" width="14.8" height="14.5" fill="none" stroke="#000" stroke-width="2"/><rect x="5" y="10" width="6.5" height="6.5" fill="#000"/><polygon points="0.8,13.2 5.2,8.0 5.2,18.6" fill="#000"/></svg></div></div><div class="abs" style="left:41px;top:41px;width:38px;height:38px;box-sizing:border-box;border:3px solid;border-color:#d8f8f8 #4e8888 #4e8888 #d8f8f8;background:#9cdcdc"><div class="abs" style="left:1px;top:1px;width:30px;height:30px;box-sizing:border-box;border:1px solid #000;background:#9cdcdc"><svg class="abs" style="left:0;top:0" width="28" height="28" viewBox="0 0 28 28"><rect x="5" y="6" width="14.8" height="14.5" fill="none" stroke="#000" stroke-width="2"/><rect x="16" y="10" width="6.5" height="6.5" fill="#000"/><polygon points="26.8,13.2 22.3,8.0 22.3,18.6" fill="#000"/></svg></div></div><div class="abs" style="left:1px;top:81px;width:38px;height:38px;box-sizing:border-box;border:3px solid;border-color:#d8f8f8 #4e8888 #4e8888 #d8f8f8;background:#9cdcdc"><div class="abs" style="left:1px;top:1px;width:30px;height:30px;box-sizing:border-box;border:1px solid #000;background:#9cdcdc"><svg class="abs" style="left:0;top:0" width="28" height="28" viewBox="0 0 28 28"><rect x="7" y="7" width="13.8" height="13.8" fill="none" stroke="#000" stroke-width="2"/><path d="M8 0.7 H19 M8 27.3 H19 M0.7 8.2 V19 M27.3 8.2 V19" stroke="#000" stroke-width="1.5" fill="none"/><polygon points="9.6,1.2 17.4,1.2 13.5,5.0" fill="#000"/><polygon points="9.6,26.8 17.4,26.8 13.5,23.0" fill="#000"/><polygon points="1.2,9.7 1.2,17.5 5.8,13.6" fill="#000"/><polygon points="26.8,9.7 26.8,17.5 22.2,13.6" fill="#000"/></svg></div></div><div class="abs" style="left:41px;top:81px;width:38px;height:38px;box-sizing:border-box;border:3px solid;border-color:#d8f8f8 #4e8888 #4e8888 #d8f8f8;background:#9cdcdc"><div class="abs" style="left:1px;top:1px;width:30px;height:30px;box-sizing:border-box;border:1px solid #000;background:#9cdcdc"><svg class="abs" style="left:0;top:0" width="28" height="28" viewBox="0 0 28 28"><rect x="10.4" y="11.2" width="6" height="6" fill="none" stroke="#000" stroke-width="2"/><polygon points="13.4,2.8 8.0,7.4 18.8,7.4" fill="#000"/><polygon points="13.4,25.8 8.0,21.4 18.8,21.4" fill="#000"/><polygon points="2.2,14.2 6.6,9.2 6.6,19.4" fill="#000"/><polygon points="24.6,14.2 20.2,9.2 20.2,19.4" fill="#000"/></svg></div></div><div class="abs" style="left:1px;top:121px;width:38px;height:38px;box-sizing:border-box;border:3px solid;border-color:#d8f8f8 #4e8888 #4e8888 #d8f8f8;background:#9cdcdc"><div class="abs" style="left:1px;top:1px;width:30px;height:30px;box-sizing:border-box;border:1px solid #000;background:#9cdcdc"><svg class="abs" style="left:0;top:0" width="28" height="28" viewBox="0 0 28 28"><path d="M2.2 4.2 H19" stroke="#000" stroke-width="2.6" fill="none"/><path d="M25.5 2.3 H22 A3 3 0 0 0 22 6.3 H25.5" stroke="#000" stroke-width="2" fill="none"/><path d="M2.5 11.3 L6.5 9.6 H25.2 V13.1 H6.5 Z M6.5 9.6 V13.1" stroke="#000" stroke-width="1" fill="none"/><path d="M10 20 C10 16,16 14.5,20 15.5 C24 16.5,22.5 21,20.5 23.5 C18.5 26.5,10.5 27,10 20 Z" stroke="#000" stroke-width="1.1" fill="none"/><circle cx="13.5" cy="20.5" r="1" fill="none" stroke="#000" stroke-width=".8"/><circle cx="16" cy="18" r="1" fill="none" stroke="#000" stroke-width=".8"/><circle cx="19.5" cy="18.5" r="1" fill="none" stroke="#000" stroke-width=".8"/></svg></div></div><div class="abs" style="left:41px;top:121px;width:38px;height:38px;box-sizing:border-box;border:3px solid;border-color:#d8f8f8 #4e8888 #4e8888 #d8f8f8;background:#9cdcdc"><div class="abs" style="left:1px;top:1px;width:30px;height:30px;box-sizing:border-box;border:1px solid #000;background:#9cdcdc"><svg class="abs" style="left:0;top:0" width="28" height="28" viewBox="0 0 28 28"><path d="M8 0 V28 M18.2 0 V28 M0 1.5 H28 M0 12.5 H28 M0 23.5 H28" stroke="#b4dcdc" stroke-width="1" fill="none"/><path d="M8.5 14.5 H28" stroke="#c81010" stroke-width="4" fill="none"/><circle cx="8.5" cy="14.5" r="6" fill="#700808"/><circle cx="8.5" cy="14.5" r="4.8" fill="#000"/><path d="M1 25 L4.6 21.6 M2 21.4 H4.8 V24.2" stroke="#000" stroke-width="1" fill="none"/></svg></div></div><div class="abs" style="left:1px;top:165px;width:38px;height:38px;box-sizing:border-box;border:3px solid;border-color:#ececec #808080 #808080 #ececec;background:#ffffff"><div class="abs" style="left:1px;top:1px;width:30px;height:30px;box-sizing:border-box;border:1px solid #000;background:#ffffff"><svg class="abs" style="left:0;top:0" width="28" height="28" viewBox="0 0 28 28"><rect x="6" y="7.2" width="15.6" height="15.6" fill="none" stroke="#000" stroke-width="1.2"/><circle cx="14" cy="14.8" r="6.1" fill="#000"/><path d="M17.5 7.5 L25 2.8" stroke="#000" stroke-width="2.2" fill="none"/><polygon points="27.0,1.2 20.8,2.2 25.6,7.6" fill="#000"/></svg></div></div><div class="abs" style="left:41px;top:165px;width:38px;height:38px;box-sizing:border-box;border:3px solid;border-color:#ececec #808080 #808080 #ececec;background:#ffffff"><div class="abs" style="left:1px;top:1px;width:30px;height:30px;box-sizing:border-box;border:1px solid #000;background:#ffffff"><svg class="abs" style="left:0;top:0" width="28" height="28" viewBox="0 0 28 28"><rect x="0" y="0" width="28" height="28" fill="#000"/><rect x="13.3" y="3.3" width="14" height="11.5" fill="none" stroke="#c02020" stroke-width="2.2"/><rect x="1" y="17.4" width="9.7" height="9.2" fill="#1818a8"/><rect x="4" y="20.2" width="3.6" height="3.6" fill="#08085c"/><path d="M2.6 17.4 L12.3 2.8 M10.7 25 L22 18" stroke="#fff" stroke-width="1" fill="none"/></svg></div></div><div class="abs" style="left:1px;top:205px;width:38px;height:38px;box-sizing:border-box;border:3px solid;border-color:#f0f0f0 #808080 #808080 #f0f0f0;background:#d4d4d8"><div class="abs" style="left:1px;top:1px;width:30px;height:30px;box-sizing:border-box;border:1px solid #000;background:#d4d4d8"><svg class="abs" style="left:0;top:0" width="28" height="28" viewBox="0 0 28 28"><path d="M6.5 6.5 V21 H21.6" stroke="#0000f8" stroke-width="3" fill="none"/><circle cx="6.5" cy="6.5" r="4.7" fill="#0000f8"/><circle cx="6.5" cy="21" r="4.8" fill="#0000f8"/><circle cx="21.6" cy="21" r="4.8" fill="#0000f8"/><circle cx="21.6" cy="6.5" r="4.5" fill="#f80000"/></svg></div></div><div class="abs" style="left:41px;top:205px;width:38px;height:38px;box-sizing:border-box;border:3px solid;border-color:#f0f0f0 #808080 #808080 #f0f0f0;background:#d4d4d8"><div class="abs" style="left:1px;top:1px;width:30px;height:30px;box-sizing:border-box;border:1px solid #000;background:#d4d4d8"><svg class="abs" style="left:0;top:0" width="28" height="28" viewBox="0 0 28 28"><rect x="9.6" y="10.2" width="8.2" height="8.2" fill="#0000c8"/><path d="M6.4 7.5 L22 21 M6.4 21 L22 7.5" stroke="#000" stroke-width="1.6" fill="none"/></svg></div></div><div class="abs" style="left:1px;top:245px;width:38px;height:38px;box-sizing:border-box;border:3px solid;border-color:#f0f0f0 #808080 #808080 #f0f0f0;background:#d4d4d8"><div class="abs" style="left:1px;top:1px;width:30px;height:30px;box-sizing:border-box;border:1px solid #000;background:#d4d4d8"><svg class="abs" style="left:0;top:0" width="28" height="28" viewBox="0 0 28 28"><path d="M4.9 20.6 L22.2 4.5" stroke="#e81010" stroke-width="2.8" stroke-linecap="round" fill="none"/><path d="M5.5 23.3 H24.3" stroke="#0000e8" stroke-width="2.8" stroke-linecap="round" fill="none"/><path d="M21.5 18.3 L18.3 15.3 M18.3 18 V15.3 H21" stroke="#000" stroke-width="1" fill="none"/></svg></div></div><div class="abs" style="left:41px;top:245px;width:38px;height:38px;box-sizing:border-box;border:3px solid;border-color:#f0f0f0 #808080 #808080 #f0f0f0;background:#d4d4d8"><div class="abs" style="left:1px;top:1px;width:30px;height:30px;box-sizing:border-box;border:1px solid #000;background:#d4d4d8"><svg class="abs" style="left:0;top:0" width="28" height="28" viewBox="0 0 28 28"><path d="M13.4 12.5 L24 2.5" stroke="#e81010" stroke-width="2.8" stroke-linecap="round" fill="none"/><path d="M4.8 21.2 L13.4 12.5" stroke="#0000e8" stroke-width="2.8" stroke-linecap="round" fill="none"/><path d="M15 19.5 L18.4 16.3 M15.8 16.3 H18.4 V19" stroke="#000" stroke-width="1" fill="none"/></svg></div></div><div class="abs" style="left:1px;top:285px;width:38px;height:38px;box-sizing:border-box;border:3px solid;border-color:#f0f0f0 #808080 #808080 #f0f0f0;background:#d4d4d8"><div class="abs" style="left:1px;top:1px;width:30px;height:30px;box-sizing:border-box;border:1px solid #000;background:#d4d4d8"><svg class="abs" style="left:0;top:0" width="28" height="28" viewBox="0 0 28 28"><rect x="16.2" y="0.8" width="10.8" height="10.8" fill="#f01010"/><circle cx="21.6" cy="6.2" r="3.2" fill="#d8d8d8"/><rect x="1.7" y="16.1" width="10" height="10" fill="#e8e8f8" stroke="#0000e0" stroke-width="1.2"/><circle cx="6.7" cy="21.1" r="3.3" fill="#0000e8"/><path d="M12 14.8 L15 12.2 M12.6 12.2 H15 V14.6" stroke="#000" stroke-width="1.1" fill="none"/></svg></div></div><div class="abs" style="left:41px;top:285px;width:38px;height:38px;box-sizing:border-box;border:3px solid;border-color:#f0f0f0 #808080 #808080 #f0f0f0;background:#d4d4d8"><div class="abs" style="left:1px;top:1px;width:30px;height:30px;box-sizing:border-box;border:1px solid #000;background:#d4d4d8"><svg class="abs" style="left:0;top:0" width="28" height="28" viewBox="0 0 28 28"><path d="M3.7 13.2 H28" stroke="#e81010" stroke-width="2.8" stroke-linecap="round" fill="none"/><path d="M10.7 13.2 H16.6" stroke="#1010e0" stroke-width="2.8" fill="none"/></svg></div></div><div class="abs" style="left:1px;top:325px;width:38px;height:38px;box-sizing:border-box;border:3px solid;border-color:#f0f0f0 #808080 #808080 #f0f0f0;background:#d4d4d8"><div class="abs" style="left:1px;top:1px;width:30px;height:30px;box-sizing:border-box;border:1px solid #000;background:#d4d4d8"><svg class="abs" style="left:0;top:0" width="28" height="28" viewBox="0 0 28 28"><polygon points="16.2,7.7 3.6,22 24.2,22" fill="#e8e8f4" stroke="#e81010" stroke-width="2"/><path d="M5 21.5 H23" stroke="#0000e8" stroke-width="3" fill="none"/><path d="M15.2 18 V14.2 M13.4 16 L15.2 14 L17 16" stroke="#000" stroke-width="1" fill="none"/></svg></div></div><div class="abs" style="left:41px;top:325px;width:38px;height:38px;box-sizing:border-box;border:3px solid;border-color:#f0f0f0 #808080 #808080 #f0f0f0;background:#d4d4d8"><div class="abs" style="left:1px;top:1px;width:30px;height:30px;box-sizing:border-box;border:1px solid #000;background:#d4d4d8"><svg class="abs" style="left:0;top:0" width="28" height="28" viewBox="0 0 28 28"><path d="M1 28 L12.8 1.8 L24.6 28" stroke="#e81010" stroke-width="2" fill="none"/><path d="M3.7 28 L12.8 17.4 L21.9 28" stroke="#0000e8" stroke-width="2.6" fill="none"/><path d="M13.4 15.2 V10.6 M11.2 12.8 L13.4 10.4 L15.6 12.8" stroke="#000" stroke-width="1.2" fill="none"/></svg></div></div><div class="abs" style="left:1px;top:365px;width:38px;height:38px;box-sizing:border-box;border:3px solid;border-color:#ffe4a0 #a87c20 #a87c20 #ffe4a0;background:#ffc250"><div class="abs" style="left:1px;top:1px;width:30px;height:30px;box-sizing:border-box;border:1px solid #000;background:#ffc250"><svg class="abs" style="left:0;top:0" width="28" height="28" viewBox="0 0 28 28"><polygon points="10.3,4.8 10.3,14.8 13.3,12.6 16.6,20.2 19.0,19.2 15.8,11.8 18.9,11.6" fill="#000"/></svg></div></div><div class="abs" style="left:41px;top:365px;width:38px;height:38px;box-sizing:border-box;border:3px solid;border-color:#ffe4a0 #a87c20 #a87c20 #ffe4a0;background:#ffc250"><div class="abs" style="left:1px;top:1px;width:30px;height:30px;box-sizing:border-box;border:1px solid #000;background:#ffc250"><svg class="abs" style="left:0;top:0" width="28" height="28" viewBox="0 0 28 28"><rect x="3.9" y="2.9" width="26" height="21.4" fill="none" stroke="#f01010" stroke-width="1.6"/><polygon points="10.3,4.4 10.3,14.4 13.3,12.2 16.6,19.8 19.0,18.8 15.8,11.4 18.9,11.2" fill="#000"/></svg></div></div><div class="abs" style="left:0;top:160px;width:70px;height:2px;background:#7ab8b0"></div></div><div class="abs" style="left:1275px;top:462px;width:2px;height:266px;background:#3a7c6c"></div><div class="abs" style="left:1277px;top:519px;width:68px;height:152px;background:#ff0000;box-sizing:border-box;border:1px solid #a07000;border-right:none"></div><div class="abs" style="left:1285px;top:526px;width:60px;height:138px;box-sizing:border-box;border:1px solid #a0a0a0;border-left:2px solid #30d8e8;border-right:none;border-bottom-color:#30d8e8"></div><div class="abs" style="left:1276px;top:727px;width:69px;height:46px;background:#55ccb0;box-sizing:border-box;border-top:3px solid #b8f0e0;border-left:1px solid #b8f0e0;border-bottom:2px solid #b8f0e0"></div><span class="abs" style="left:1280px;top:736.5px;font-family:'Liberation Mono',monospace;font-size:12.6px;letter-spacing:1.9px;line-height:15.3px;color:#000;white-space:pre;-webkit-text-stroke:0.45px #000">X = 5.8
Y = -0.0</span><div class="abs" style="left:659px;top:170px;width:589px;height:403px;box-sizing:border-box;background:#d4d0c8;border:1px solid;border-color:#d4d0c8 #404040 #404040 #d4d0c8"><div class="abs" style="left:0;top:0;width:585px;height:399px;border:1px solid;border-color:#fff #808080 #808080 #fff"></div><div class="abs" style="left:3px;top:3px;width:581px;height:18px;background:linear-gradient(90deg,#0a246a,#a6caf0)"></div><div class="abs" style="left:6px;top:5px;width:15px;height:14px;background:#f4f4f4;border-top:2px solid #1c2c8c;box-sizing:border-box"><svg width="15" height="12" viewBox="0 0 15 12"><path d="M3.5 2.5 L11.5 10 M11.5 2.5 L3.5 10" stroke="#d8d020" stroke-width="2.2" fill="none"/></svg></div><span class="abs" style="left:22px;top:5.5px;font-family:'Liberation Sans',sans-serif;font-weight:bold;font-size:11.4px;line-height:14px;color:#fff;white-space:pre;letter-spacing:0">Popview - 1</span><div class="abs" style="left:567px;top:5px;width:16px;height:14px;box-sizing:border-box;background:#d4d0c8;border:1px solid;border-color:#fff #404040 #404040 #fff"><svg class="abs" style="left:0;top:0" width="14" height="12"><path d="M3.5 2.5 L10.5 9.5 M10.5 2.5 L3.5 9.5" stroke="#000" stroke-width="1.7" fill="none"/></svg></div><div class="abs" style="left:3px;top:22px;width:582px;height:376px;background:#000"></div><div class="abs" style="left:3px;top:22px;width:546px;height:347px;box-sizing:border-box;border:3px solid;border-color:#2f7a68 #b8f0e8 #b8f0e8 #2f7a68;background:#000"></div><div class="abs" style="left:550px;top:24px;width:33px;height:33px;box-sizing:border-box;border:2px solid;border-color:#c8f6ee #4ca494 #4ca494 #c8f6ee;background:#84dccc"><div class="abs" style="left:0;top:0;width:27px;height:27px;border:1px solid;border-color:#a8ece0 #60b8a8 #60b8a8 #a8ece0"></div><div class="abs" style="left:4px;top:4px;width:21px;height:21px;box-sizing:border-box;border:1px solid #000;background:#a4e0e0"><svg class="abs" style="left:0;top:0" width="19" height="19" viewBox="0 0 28 28"><g stroke="#000" stroke-width="1.1"><rect x="2.5" y="8" width="13" height="13" fill="none" stroke="#000" stroke-width="2.6"/><path d="M6 14.5 H12 M8.5 12 L6 14.5 L8.5 17" stroke="#000" stroke-width="1.4" fill="none"/><rect x="19" y="2.5" width="6.5" height="6.5" fill="none" stroke="#000" stroke-width="1.4"/><path d="M15.5 14 H22 V9" stroke="#000" stroke-width="1.4" fill="none"/></g></svg></div></div><div class="abs" style="left:550px;top:59px;width:33px;height:33px;box-sizing:border-box;border:2px solid;border-color:#c8f6ee #4ca494 #4ca494 #c8f6ee;background:#84dccc"><div class="abs" style="left:0;top:0;width:27px;height:27px;border:1px solid;border-color:#a8ece0 #60b8a8 #60b8a8 #a8ece0"></div><div class="abs" style="left:4px;top:4px;width:21px;height:21px;box-sizing:border-box;border:1px solid #000;background:#a4e0e0"><svg class="abs" style="left:0;top:0" width="19" height="19" viewBox="0 0 28 28"><g stroke="#000" stroke-width="1.1"><rect x="7" y="8" width="15.6" height="13.6" fill="none" stroke="#000" stroke-width="3"/><rect x="11" y="4.5" width="6.5" height="7.3" fill="#000"/><polygon points="14.2,0.8 9.0,5.0 19.6,5.0" fill="#000"/></g></svg></div></div><div class="abs" style="left:550px;top:94px;width:33px;height:33px;box-sizing:border-box;border:2px solid;border-color:#c8f6ee #4ca494 #4ca494 #c8f6ee;background:#84dccc"><div class="abs" style="left:0;top:0;width:27px;height:27px;border:1px solid;border-color:#a8ece0 #60b8a8 #60b8a8 #a8ece0"></div><div class="abs" style="left:4px;top:4px;width:21px;height:21px;box-sizing:border-box;border:1px solid #000;background:#a4e0e0"><svg class="abs" style="left:0;top:0" width="19" height="19" viewBox="0 0 28 28"><g stroke="#000" stroke-width="1.1"><rect x="7" y="6" width="15.6" height="13.6" fill="none" stroke="#000" stroke-width="3"/><rect x="11" y="16" width="6.5" height="6.8" fill="#000"/><polygon points="14.3,27.0 9.0,22.5 19.8,22.5" fill="#000"/></g></svg></div></div><div class="abs" style="left:550px;top:129px;width:33px;height:33px;box-sizing:border-box;border:2px solid;border-color:#c8f6ee #4ca494 #4ca494 #c8f6ee;background:#84dccc"><div class="abs" style="left:0;top:0;width:27px;height:27px;border:1px solid;border-color:#a8ece0 #60b8a8 #60b8a8 #a8ece0"></div><div class="abs" style="left:4px;top:4px;width:21px;height:21px;box-sizing:border-box;border:1px solid #000;background:#a4e0e0"><svg class="abs" style="left:0;top:0" width="19" height="19" viewBox="0 0 28 28"><g stroke="#000" stroke-width="1.1"><rect x="8" y="6" width="14.8" height="14.5" fill="none" stroke="#000" stroke-width="3"/><rect x="5" y="10" width="6.5" height="6.5" fill="#000"/><polygon points="0.8,13.2 5.2,8.0 5.2,18.6" fill="#000"/></g></svg></div></div><div class="abs" style="left:550px;top:164px;width:33px;height:33px;box-sizing:border-box;border:2px solid;border-color:#c8f6ee #4ca494 #4ca494 #c8f6ee;background:#84dccc"><div class="abs" style="left:0;top:0;width:27px;height:27px;border:1px solid;border-color:#a8ece0 #60b8a8 #60b8a8 #a8ece0"></div><div class="abs" style="left:4px;top:4px;width:21px;height:21px;box-sizing:border-box;border:1px solid #000;background:#a4e0e0"><svg class="abs" style="left:0;top:0" width="19" height="19" viewBox="0 0 28 28"><g stroke="#000" stroke-width="1.1"><rect x="5" y="6" width="14.8" height="14.5" fill="none" stroke="#000" stroke-width="3"/><rect x="16" y="10" width="6.5" height="6.5" fill="#000"/><polygon points="26.8,13.2 22.3,8.0 22.3,18.6" fill="#000"/></g></svg></div></div><div class="abs" style="left:550px;top:199px;width:33px;height:33px;box-sizing:border-box;border:2px solid;border-color:#c8f6ee #4ca494 #4ca494 #c8f6ee;background:#84dccc"><div class="abs" style="left:0;top:0;width:27px;height:27px;border:1px solid;border-color:#a8ece0 #60b8a8 #60b8a8 #a8ece0"></div><div class="abs" style="left:4px;top:4px;width:21px;height:21px;box-sizing:border-box;border:1px solid #000;background:#a4e0e0"><svg class="abs" style="left:0;top:0" width="19" height="19" viewBox="0 0 28 28"><g stroke="#000" stroke-width="1.1"><rect x="7" y="7" width="13.8" height="13.8" fill="none" stroke="#000" stroke-width="3"/><path d="M8 0.7 H19 M8 27.3 H19 M0.7 8.2 V19 M27.3 8.2 V19" stroke="#000" stroke-width="1.5" fill="none"/><polygon points="9.6,1.2 17.4,1.2 13.5,5.0" fill="#000"/><polygon points="9.6,26.8 17.4,26.8 13.5,23.0" fill="#000"/><polygon points="1.2,9.7 1.2,17.5 5.8,13.6" fill="#000"/><polygon points="26.8,9.7 26.8,17.5 22.2,13.6" fill="#000"/></g></svg></div></div><div class="abs" style="left:550px;top:234px;width:33px;height:33px;box-sizing:border-box;border:2px solid;border-color:#c8f6ee #4ca494 #4ca494 #c8f6ee;background:#84dccc"><div class="abs" style="left:0;top:0;width:27px;height:27px;border:1px solid;border-color:#a8ece0 #60b8a8 #60b8a8 #a8ece0"></div><div class="abs" style="left:4px;top:4px;width:21px;height:21px;box-sizing:border-box;border:1px solid #000;background:#a4e0e0"><svg class="abs" style="left:0;top:0" width="19" height="19" viewBox="0 0 28 28"><g stroke="#000" stroke-width="1.1"><rect x="10.4" y="11.2" width="6" height="6" fill="none" stroke="#000" stroke-width="3"/><polygon points="13.4,2.8 8.0,7.4 18.8,7.4" fill="#000"/><polygon points="13.4,25.8 8.0,21.4 18.8,21.4" fill="#000"/><polygon points="2.2,14.2 6.6,9.2 6.6,19.4" fill="#000"/><polygon points="24.6,14.2 20.2,9.2 20.2,19.4" fill="#000"/></g></svg></div></div><div class="abs" style="left:549px;top:269px;width:34px;height:99px;background:#55ccb0"></div><div class="abs mono" style="left:4px;top:370px;width:580px;height:28px;box-sizing:border-box;border:2px solid #58c8b0;border-top-color:#c8fcf4;background:#9cdcdc"><div class="abs" style="left:0;top:0;width:574px;height:22px;border:1px solid;border-color:#c8fcf4 #4e8c8c #4e8c8c #c8fcf4;"></div><span class="abs" style="left:0;width:576px;top:5px;text-align:center;font-weight:normal;font-size:13.4px;letter-spacing:.7px;line-height:16px;-webkit-text-stroke:.3px #000">Close</span></div></div><svg class="abs" style="left:666px;top:196px" width="539" height="341" viewBox="666 196 539 341"><path d="M667 197.4 H708" stroke="#48a41c" stroke-width="1"/><rect x="666.8" y="221.1" width="41.0" height="46.7" fill="#48a41c"/><rect x="667.3" y="224.1" width="38.7" height="42.2" fill="#c49a0c"/><rect x="666.8" y="291.5" width="41.0" height="46.3" fill="#48a41c"/><rect x="667.3" y="294.5" width="38.7" height="41.8" fill="#c49a0c"/><rect x="843.9" y="196.0" width="68.2" height="32.5" fill="#48a41c"/><rect x="845.9" y="196.0" width="64.2" height="30.5" fill="#c49a0c"/><rect x="956.3" y="196.0" width="67.7" height="32.5" fill="#48a41c"/><rect x="958.3" y="196.0" width="63.7" height="30.5" fill="#c49a0c"/><rect x="1107.0" y="196.0" width="67.7" height="60.7" fill="#48a41c"/><rect x="1109.2" y="196.0" width="64.0" height="58.5" fill="#c49a0c"/><rect x="885.0" y="267.5" width="28.0" height="38.2" fill="#48a41c"/><rect x="885.0" y="268.7" width="28.0" height="37.0" fill="#c49a0c"/><rect x="885.0" y="304.8" width="28.0" height="53.5" fill="#48a41c"/><rect x="887.0" y="307.8" width="24.0" height="48.5" fill="#c49a0c"/><rect x="885.0" y="371.8" width="28.0" height="40.0" fill="#48a41c"/><rect x="885.0" y="374.0" width="28.0" height="37.2" fill="#c49a0c"/><path d="M919.6 267.5 H947.6 V295.8 H955.7 V267.5 H983.4 V305.7 H978.9 V372.8 H983.4 V411.8 H955.7 V382.4 H947.6 V411.8 H919.6 Z" fill="#c49a0c"/><path d="M920.4 305 V373 M979.4 305.7 V372.8 M919.6 268 H947.6 M955.7 268 H983.4 M919.6 411.4 H947.6 M955.7 411.4 H983.4" stroke="#48a41c" stroke-width="1.4" fill="none"/><rect x="1076.0" y="291.3" width="47.3" height="46.6" fill="#48a41c"/><rect x="1078.0" y="293.3" width="43.3" height="42.6" fill="#c49a0c"/><rect x="1076.0" y="361.9" width="47.3" height="46.6" fill="#48a41c"/><rect x="1078.0" y="363.9" width="43.3" height="42.6" fill="#c49a0c"/><rect x="1145.8" y="291.3" width="47.5" height="46.6" fill="#48a41c"/><rect x="1147.8" y="293.3" width="43.5" height="42.6" fill="#c49a0c"/><rect x="1145.8" y="361.9" width="47.5" height="46.6" fill="#48a41c"/><rect x="1147.8" y="363.9" width="43.5" height="42.6" fill="#c49a0c"/><rect x="801.9" y="435.7" width="46.1" height="46.5" fill="#48a41c"/><rect x="803.9" y="437.7" width="42.1" height="42.5" fill="#c49a0c"/><rect x="874.9" y="435.7" width="46.7" height="46.5" fill="#48a41c"/><rect x="876.9" y="437.7" width="42.7" height="42.5" fill="#c49a0c"/><rect x="945.8" y="435.7" width="47.5" height="46.5" fill="#48a41c"/><rect x="947.8" y="437.7" width="43.5" height="42.5" fill="#c49a0c"/><rect x="801.9" y="506.0" width="46.1" height="34.0" fill="#48a41c"/><rect x="803.9" y="508.0" width="42.1" height="32.0" fill="#c49a0c"/><rect x="949.0" y="506.0" width="46.9" height="34.0" fill="#48a41c"/><rect x="951.0" y="508.0" width="42.9" height="32.0" fill="#c49a0c"/><rect x="1126.7" y="501.0" width="29.5" height="39.0" fill="#48a41c"/><rect x="1128.7" y="503.0" width="26.0" height="37.0" fill="#c49a0c"/><rect x="1172.5" y="501.0" width="29.5" height="39.0" fill="#48a41c"/><rect x="1174.5" y="503.0" width="26.0" height="37.0" fill="#c49a0c"/></svg><div id="status" class="abs" style="overflow:hidden"><div class="abs" style="left:0px;top:1px;width:30px;height:28px;box-sizing:border-box;border:2px solid;border-color:#ffffff #c8c8a8 #c8c8a8 #ffffff;background:#fffcd6"></div><div class="abs" style="left:2px;top:3px;width:26px;height:28px;box-sizing:border-box;border:1px solid;border-color:#d8d8b8 #ffffff #ffffff #d8d8b8"></div><div class="abs" style="left:6px;top:5px;width:21px;height:18px;box-sizing:border-box;border:1px solid #000;border-bottom:none;background:#fffcd6;overflow:hidden"><svg class="abs" style="left:0;top:0" width="19" height="17"><path d="M3 2.8 L15.3 14.6 M3 7 V2.8 H7.4 M15.3 10.4 V14.6 H11" stroke="#000" stroke-width="1.2" fill="none"/></svg></div><div class="abs" style="left:33px;top:1px;width:30px;height:28px;box-sizing:border-box;border:2px solid;border-color:#ffffff #c8c8a8 #c8c8a8 #ffffff;background:#fffcd6"></div><div class="abs" style="left:35px;top:3px;width:26px;height:28px;box-sizing:border-box;border:1px solid;border-color:#d8d8b8 #ffffff #ffffff #d8d8b8"></div><div class="abs" style="left:38px;top:5px;width:21px;height:18px;box-sizing:border-box;border:1px solid #000;border-bottom:none;background:#fffcd6;overflow:hidden"><svg class="abs" style="left:0;top:0" width="19" height="17"><path d="M1.9 15.3 L14.5 3.4 M1.9 15.3 H16 M5.8 4.6 V7.6 H8" stroke="#000" stroke-width="1.2" fill="none"/><text x="10.2" y="14.6" font-size="5.5" font-family="Liberation Sans, sans-serif" font-weight="bold">ox</text></svg></div><div class="abs" style="left:65px;top:1px;width:29px;height:28px;box-sizing:border-box;border:3px solid;border-color:#4a9a88 #b8ecd8 #b8ecd8 #4a9a88;background:#7fd0c0"></div><div class="abs" style="left:72px;top:5px;width:16px;height:18px;box-sizing:border-box;border:1px solid #000;border-bottom:none;background:#fffcd6;overflow:hidden"><svg class="abs" style="left:0;top:0" width="14" height="17"><path d="M1.4 17 V7 L5.4 2.4 H12.4 V17 M1.4 9.4 H12.4 M7.4 2.4 V17" stroke="#000" stroke-width="1.2" fill="none"/></svg></div><span class="abs mono" style="left:97px;top:8px;font-size:12px;line-height:16px;letter-spacing:1.5px">X Y :</span><div class="abs" style="left:143px;top:2px;width:170px;height:26px;box-sizing:border-box;border:2px solid;border-color:#b4b496 #fffff0 #fffff0 #b4b496;background:#fffcd6"></div><div class="abs" style="left:151px;top:6px;width:0;height:14px;border-left:1px dotted #000"></div><div class="abs" style="left:316px;top:1px;width:31px;height:28px;box-sizing:border-box;border:3px solid;border-color:#4a9a88 #b8ecd8 #b8ecd8 #4a9a88;background:#7fd0c0"></div><div class="abs" style="left:322px;top:5px;width:19px;height:18px;box-sizing:border-box;border:1px solid #000;border-bottom:none;background:#fffcd6;overflow:hidden"><svg class="abs" style="left:0;top:0" width="17" height="17"><path d="M8.5 3.5 V12" stroke="#000" stroke-width="2" fill="none"/><rect x="7.5" y="14" width="2" height="2" fill="#000"/></svg></div><span class="abs mono" style="left:351px;top:7px;font-size:11.67px;line-height:16px">&lt;M1&gt; - Select first area corner</span></div></body></html>
